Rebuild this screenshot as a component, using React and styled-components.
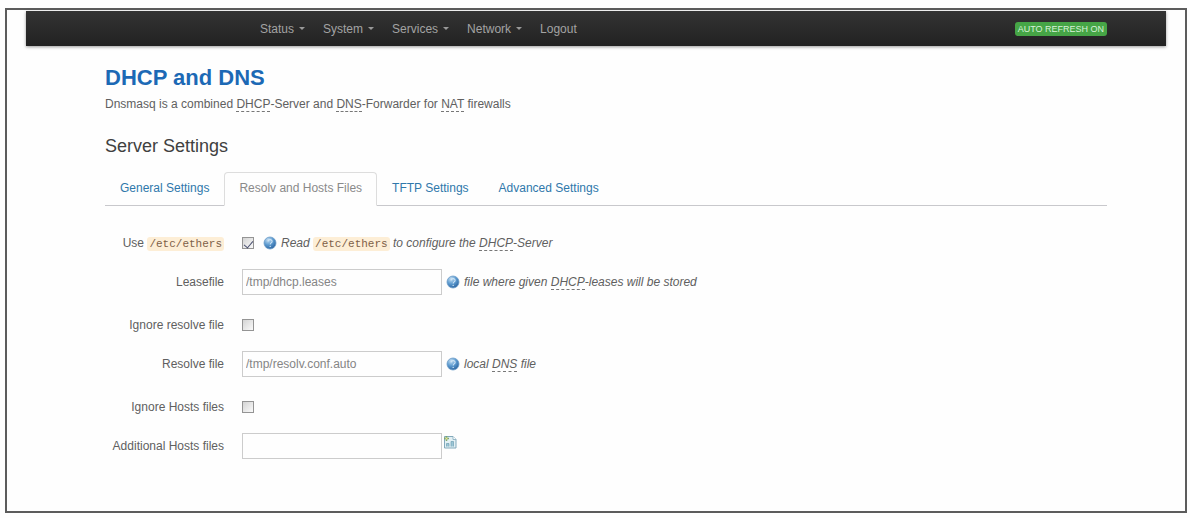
import React, { useState } from 'react'
import styled, { createGlobalStyle } from 'styled-components'

const menu = [
    { name: 'Status', dropdown: true },
    { name: 'System', dropdown: true },
    { name: 'Services', dropdown: true },
    { name: 'Network', dropdown: true },
    { name: 'Logout', dropdown: false },
]

const tabs = ['General Settings', 'Resolv and Hosts Files', 'TFTP Settings', 'Advanced Settings']

const HelpIcon = () => (
    <svg width='14' height='14' viewBox='0 0 14 14' aria-hidden='true'>
        <defs>
            <radialGradient id='globe' cx='0.35' cy='0.25' r='0.8'>
                <stop offset='0' stopColor='#c4def2' />
                <stop offset='0.5' stopColor='#5d9bd0' />
                <stop offset='1' stopColor='#2b639f' />
            </radialGradient>
        </defs>
        <circle cx='7' cy='7' r='6' fill='url(#globe)' stroke='#6b9cc8' strokeWidth='0.8' />
        <path d='M5 5.400c.2-2.400 4.200-2.300 4.100.1 0 1.400-1.900 1.500-1.900 3' fill='none' stroke='#cfe4f5' strokeWidth='1.100' />
        <circle cx='7.200' cy='10.400' r='0.700' fill='#cfe4f5' />
    </svg>
)

const AddIcon = () => (
    <svg width='14' height='14' viewBox='0 0 14 14' aria-hidden='true'>
        <path d='M1.500 1.500h8.500l3 3v8.500H1.500z' fill='#e3f0f4' stroke='#82a9bb' />
        <path d='M10 1.500v3h3' fill='#fff' stroke='#82a9bb' strokeWidth='0.8' />
        <path d='M3.500 11.500V8.500h2.500v3M8 11.500V6.500h2.500v5' fill='#9cc6d6' stroke='#6f9fb3' strokeWidth='0.7' />
        <path d='M3.500 1v5M1 3.500h5' stroke='#7da66b' strokeWidth='1.500' />
        <circle cx='3.500' cy='3.500' r='1' fill='#e9e58c' />
    </svg>
)

const Field = ({ id, label, toggle, children }) => {
    return (
        <Row $toggle={toggle}>
            <Label htmlFor={id}>{label}</Label>
            <Controls>{children}</Controls>
        </Row>
    )
}

const App = () => {
    //state for form
    const [active, setActive] = useState(tabs[1])
    const [ethers, setEthers] = useState(true)
    const [noResolv, setNoResolv] = useState(false)
    const [noHosts, setNoHosts] = useState(false)

    return (
        <>
            <GlobalStyle />
            <Frame>
                <Navbar>
                    <Menu>
                        {menu.map(({ name, dropdown }) => (
                            <li key={name}>
                                <MenuLink href='#'>{name}{dropdown && <Caret />}</MenuLink>
                            </li>
                        ))}
                    </Menu>
                    <Refresh type='button'>AUTO REFRESH ON</Refresh>
                </Navbar>

                <Content>
                    <Title><a href='#'>DHCP and DNS</a></Title>
                    <Description>
                        Dnsmasq is a combined <abbr>DHCP</abbr>-Server and <abbr>DNS</abbr>-Forwarder for <abbr>NAT</abbr> firewalls
                    </Description>
                    <Legend>Server Settings</Legend>

                    <Tabs>
                        {tabs.map(tab => (
                            <li key={tab}>
                                <TabLink href='#' $active={tab === active} onClick={() => setActive(tab)}>{tab}</TabLink>
                            </li>
                        ))}
                    </Tabs>

                    <Form>
                        <Field id='ethers' toggle label={<>Use <Code>/etc/ethers</Code></>}>
                            <Checkbox id='ethers' checked={ethers} onChange={() => setEthers(!ethers)} />
                            <Help $inset>
                                <HelpIcon />
                                <em>Read <Code>/etc/ethers</Code> to configure the <abbr>DHCP</abbr>-Server</em>
                            </Help>
                        </Field>
                        <Field id='leasefile' label='Leasefile'>
                            <TextInput id='leasefile' defaultValue='/tmp/dhcp.leases' />
                            <Help>
                                <HelpIcon />
                                <em>file where given <abbr>DHCP</abbr>-leases will be stored</em>
                            </Help>
                        </Field>
                        <Field id='noresolv' toggle label='Ignore resolve file'>
                            <Checkbox id='noresolv' checked={noResolv} onChange={() => setNoResolv(!noResolv)} />
                        </Field>
                        <Field id='resolvfile' label='Resolve file'>
                            <TextInput id='resolvfile' defaultValue='/tmp/resolv.conf.auto' />
                            <Help>
                                <HelpIcon />
                                <em>local <abbr>DNS</abbr> file</em>
                            </Help>
                        </Field>
                        <Field id='nohosts' toggle label='Ignore Hosts files'>
                            <Checkbox id='nohosts' checked={noHosts} onChange={() => setNoHosts(!noHosts)} />
                        </Field>
                        <Field id='addnhosts' label='Additional Hosts files'>
                            <TextInput id='addnhosts' />
                            <AddButton type='button' aria-label='Add'><AddIcon /></AddButton>
                        </Field>
                    </Form>
                </Content>
            </Frame>
        </>
    )
}

const GlobalStyle = createGlobalStyle`
    * {
        box-sizing: border-box;
    }
    body {
        margin: 0;
        background: #fefefe;
        color: #606060;
        font: 12px/18px "Liberation Sans", Arial, sans-serif;
    }
    a {
        color: inherit;
        text-decoration: none;
    }
    abbr {
        border-bottom: 1px dashed #777;
    }
`

const Frame = styled.div`
    margin: 8px 3px 5px 5px;
    padding: 1px 19px 52px;
    border: 2px solid #5c5c5c;
`

const Navbar = styled.nav`
    display: flex;
    justify-content: space-between;
    align-items: center;
    height: 35px;
    padding: 0 59px 0 234px;
    background: linear-gradient(#333, #222);
    box-shadow: 0 1px 3px rgba(0, 0, 0, 0.4);
`

const Menu = styled.ul`
    display: flex;
    gap: 18px;
    margin: 0;
    padding: 0;
    list-style: none;
`

const MenuLink = styled.a`
    display: flex;
    align-items: center;
    gap: 5px;
    color: #a3a3a3;
`

const Caret = styled.span`
    border: 3px solid transparent;
    border-top-color: #999;
    border-bottom: 0;
`

const Refresh = styled.button`
    padding: 0 3px;
    border: 0;
    border-radius: 3px;
    background: #46a546;
    color: #d9f2d9;
    font: 9px/14px "Liberation Sans", Arial, sans-serif;
    cursor: pointer;
`

const Content = styled.main`
    padding: 18px 59px 0 79px;
`

const Title = styled.h2`
    margin: 0;
    color: #1c69b5;
    font-size: 22px;
    line-height: 28px;
`

const Description = styled.p`
    margin: 3px 0 0;
`

const Legend = styled.h3`
    margin: 21px 0 14px;
    color: #404040;
    font-size: 18px;
    font-weight: normal;
    line-height: 24px;
`

const Tabs = styled.ul`
    display: flex;
    margin: 0;
    padding: 0;
    border-bottom: 1px solid #c8c8cc;
    list-style: none;
`

const TabLink = styled.a`
    display: block;
    margin-bottom: -1px;
    padding: 6px 14px 8px;
    border: 1px solid ${({ $active }) => $active ? '#ddd' : 'transparent'};
    border-bottom-color: ${({ $active }) => $active ? '#fefefe' : 'transparent'};
    border-radius: 4px 4px 0 0;
    color: ${({ $active }) => $active ? '#8a8a8a' : '#2f78ab'};
`

const Form = styled.form`
    display: grid;
    gap: 15px;
    padding-top: 22px;
`

const Row = styled.div`
    display: flex;
    align-items: center;
    gap: 18px;
    height: 26px;
    padding-top: ${({ $toggle }) => $toggle ? '4px' : '0'};
`

const Label = styled.label`
    width: 119px;
    text-align: right;
    white-space: nowrap;
`

const Controls = styled.div`
    display: flex;
    align-items: center;
`

const Code = styled.code`
    padding: 1px 2px;
    border-radius: 3px;
    background: #fdeed6;
    color: #7d5f48;
    font: 11px/14px "Liberation Mono", monospace;
`

const Checkbox = styled.input.attrs({ type: 'checkbox' })`
    display: grid;
    place-items: center;
    width: 12px;
    height: 12px;
    margin: 0;
    border: 1px solid #949494;
    background: linear-gradient(135deg, #d4d4d4, #fafafa);
    appearance: none;
    &:checked::after {
        content: '';
        width: 4px;
        height: 8px;
        border: solid #4a5070;
        border-width: 0 1px 1px 0;
        transform: rotate(40deg);
    }
`

const TextInput = styled.input.attrs({ type: 'text' })`
    width: 200px;
    height: 26px;
    padding: 0 3px;
    border: 1px solid #ccc;
    background: #fefefe;
    color: #858585;
    font: inherit;
`

const Help = styled.span`
    display: flex;
    align-items: center;
    gap: 4px;
    margin-left: ${({ $inset }) => $inset ? '9px' : '4px'};
`

const AddButton = styled.button`
    display: flex;
    align-self: flex-start;
    padding: 2px 1px;
    border: 0;
    background: none;
    cursor: pointer;
`

export default App
